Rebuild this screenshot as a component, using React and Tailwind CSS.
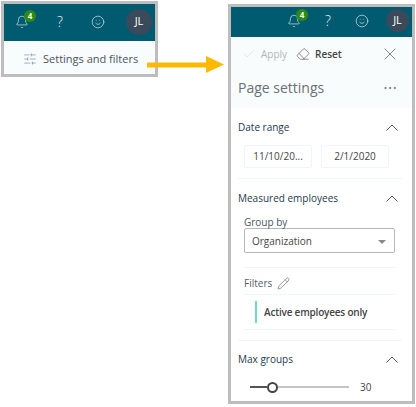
import { Bell, Check, Eraser, MoreHorizontal, Pencil, SlidersHorizontal, Smile, X } from "lucide-react";

const font = { fontFamily: '"Open Sans", "Noto Sans", sans-serif' };

const TopBar = ({ barClass, gapClass, avatarClass }) => (
  <div className={`flex items-center justify-end bg-[#005b70] pr-[3px] text-[#e4f0f3] ${barClass}`}>
    <div className={`flex items-center ${gapClass}`}>
      <span className="relative flex">
        <Bell size={14} strokeWidth={1.1} />
        <span className="absolute -right-[7px] -top-[5px] flex h-[12px] w-[12px] items-center justify-center rounded-full bg-[#2b8a12] text-[8px] font-bold leading-none text-white">
          4
        </span>
      </span>
      <span className="w-[10px] text-center text-[14px] font-light leading-none">?</span>
      <Smile size={14} strokeWidth={1.1} />
    </div>
    <span className={`flex items-center justify-center rounded-full bg-[#3a4a5a] text-[11px] text-white ${avatarClass}`}>
      JL
    </span>
  </div>
);

const SectionHead = ({ title }) => (
  <div className="flex h-[14px] items-center justify-between pr-[14px]">
    <span className="text-[10px] font-medium text-[#243a4e]">{title}</span>
    <svg width="12" height="7" viewBox="0 0 12 7" fill="none" stroke="#444" strokeWidth="0.9">
      <path d="M0.5 6.5L6 1L11.5 6.5" />
    </svg>
  </div>
);

const DateBox = ({ value }) => (
  <div className="flex h-[23px] w-[68px] items-center justify-center rounded-[2px] border border-[#eef6f7] text-[10px] text-[#444]">
    {value}
  </div>
);

export default function App() {
  return (
    <div className="relative flex h-[407px] w-[416px] items-start overflow-hidden bg-white pl-px pt-px" style={font}>
      <div className="h-[76px] w-[157px] shrink-0 border-[3px] border-[#bdbdbd] bg-[#f9fcfd]">
        <TopBar
          barClass="h-[37px] pb-[2px]"
          gapClass="gap-[26px]"
          avatarClass="ml-[21px] h-[26px] w-[26px]"
        />
        <div className="flex items-center gap-[6px] pl-[19px] pt-[10px] text-[11px] font-medium text-[#4a555f]">
          <SlidersHorizontal size={14} strokeWidth={1} className="text-[#5f7a8a]" />
          Settings and filters
        </div>
      </div>

      <div className="ml-[70px] mt-[3px] h-[400px] w-[187px] shrink-0 border-[3px] border-[#bdbdbd] bg-white">
        <TopBar
          barClass="h-[30px] pb-[3px]"
          gapClass="gap-[22px]"
          avatarClass="ml-[17px] h-[23px] w-[23px]"
        />
        <div className="h-[71px] bg-[#f9fcfd]">
          <div className="flex h-[34px] items-center pl-[11px] text-[10px]">
            <Check size={14} strokeWidth={0.8} className="text-[#c4c8cb]" />
            <span className="ml-[5px] font-medium text-[#b3b7ba]">Apply</span>
            <Eraser size={14} strokeWidth={1} className="ml-[9px] text-[#444]" />
            <span className="ml-[5px] font-semibold text-[#444]">Reset</span>
            <X size={20} strokeWidth={0.8} className="ml-[38px] text-[#444]" />
          </div>
          <div className="flex items-center justify-between pl-[7px] pr-[14px] pt-[7px]">
            <span className="text-[14px] leading-[20px] text-[#6a7074]">Page settings</span>
            <MoreHorizontal size={16} strokeWidth={0.9} className="text-[#444]" />
          </div>
        </div>

        <div className="pl-[7px]">
          <div className="pt-[12px]">
            <SectionHead title="Date range" />
          </div>
          <div className="flex gap-[9px] pl-[6px] pt-[11px]">
            <DateBox value="11/10/20..." />
            <DateBox value="2/1/2020" />
          </div>
          <div className="mr-[10px] mt-[10px] border-t border-[#eef6f7]" />

          <div className="pt-[12px]">
            <SectionHead title="Measured employees" />
          </div>
          <div className="pl-[6px] pr-[17px]">
            <div className="pt-[11px] text-[10px] font-medium leading-[12px] text-[#4a555f]">Group by</div>
            <div className="flex h-[25px] items-center justify-between rounded-[2px] border border-[#b8b8b8] pl-[7px] pr-[8px] pt-[2px] text-[10px] text-[#444]">
              Organization
              <span className="h-0 w-0 border-x-[4px] border-t-[4px] border-x-transparent border-t-[#888]" />
            </div>
            <div className="mt-[14px] border-t border-[#eef6f7]" />
            <div className="flex h-[26px] items-center gap-[5px] pt-[4px] text-[10px] font-medium text-[#55606a]">
              Filters
              <Pencil size={13} strokeWidth={1} className="text-[#444]" />
            </div>
            <div className="border-t border-[#eef6f7]" />
            <div className="flex h-[34px] items-center pl-[11px]">
              <span className="h-[22px] w-[2px] bg-[#6fdcc5]" />
              <span className="ml-[7px] text-[10px] font-semibold tracking-[-0.2px] text-[#444]">Active employees only</span>
            </div>
            <div className="border-t border-[#eef6f7]" />
          </div>
          <div className="mr-[10px] mt-[10px] border-t border-[#eef6f7]" />

          <div className="pt-[11px]">
            <SectionHead title="Max groups" />
          </div>
          <div className="mt-[14px] flex h-[14px] items-center pl-[12px]">
            <div className="flex w-[99px] items-center">
              <span className="h-[2px] w-[17px] bg-[#555]" />
              <span className="h-[11px] w-[11px] shrink-0 rounded-full border-2 border-[#444] bg-white" />
              <span className="h-[2px] flex-1 bg-[#c4c4c4]" />
            </div>
            <span className="ml-[11px] text-[10px] font-medium text-[#444]">30</span>
          </div>
        </div>
      </div>

      {/* orange arrow between the two panels */}
      <svg className="absolute left-[147px] top-[56px]" width="78" height="18" viewBox="0 0 78 18">
        <path d="M0 6.5H59V0L77 8.5L59 17V11.5H0Z" fill="#ffb900" />
      </svg>
    </div>
  );
}
